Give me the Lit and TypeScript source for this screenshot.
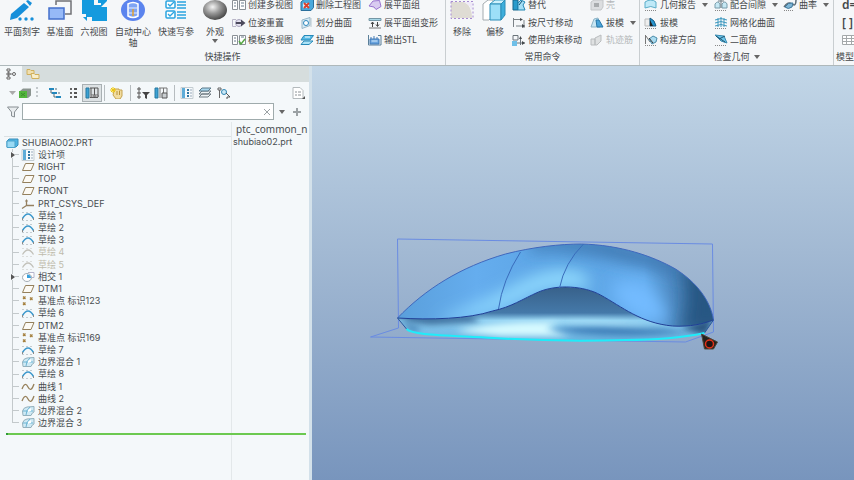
import { LitElement, html, svg, css, nothing } from "lit";
import { customElement } from "lit/decorators.js";
import { classMap } from "lit/directives/class-map.js";

// Small glyphs, all on a 14 x 12 grid.
const glyphs: Record<string, unknown> = {
  views: svg`<g fill="#fff" stroke="#8a9096"><path d="M.5 1.500h5v9h-5zM7.500 1.500h6v9h-6z"/></g><path d="M2 4h2M2 7h2M9 4h3M9 7h3" stroke="#6b7d8c"/>`,
  viewsCheck: svg`<g fill="#fff" stroke="#8a9096"><path d="M.5 1.500h5v9h-5zM7.500 1.500h6v9h-6z"/></g><path d="M2 4h2M2 7h2M9 3h3" stroke="#6b7d8c"/><path d="m7 7 2 3 4-5" fill="none" stroke="#58a846" stroke-width="1.500"/>`,
  pose: svg`<path d="M4 2.500H.500v7H4" fill="none" stroke="#b9b6c8"/><circle cx="7" cy="6" r="3.500" fill="#e6e3f2" stroke="#a7a3bb"/><path d="M4 5h5V2.500L13.500 6 9 9.500V7H4z" fill="#4c4a5c"/>`,
  deleteDrawing: svg`<path d="m1 3 3-2.500h9.500v8L11 11.500H1z" fill="#4aa8dc" stroke="#2b6f9c"/><path d="M3 4h6v5H3z" fill="#d9effa"/><path d="m4 4 5 5m0-5L4 9" stroke="#d8402c" stroke-width="2"/>`,
  split: svg`<path d="m2 3 8-2.500v8L2 11.500z" fill="#d6ebf5" stroke="#99b7c8"/><circle cx="6" cy="6" r="2.500" fill="#fff" stroke="#2c86bd"/><path d="M11 1v9" stroke="#b7c7d0"/>`,
  bend: svg`<path d="M4 1.500h9.500L10 6H1z" fill="#58bce8" stroke="#2789b8"/><path d="M1 10.500h8L13 7H4z" fill="#aee3f7" stroke="#2789b8"/><path d="M5 3h5" stroke="#fff"/>`,
  flatQuilt: svg`<path d="m1 7 4-5 6.500-.5 1.500 6-5 3L6 8z" fill="#d9cbf0" stroke="#9a74cf"/>`,
  flatDeform: svg`<path d="M1 1.500h12v2H1z" fill="#a7d8e8" stroke="#7497a6"/><path d="M4.500 10V5M9.500 5v4M3 7l1.500-2L6 7M8 7.500 9.500 9.500 11 7.500" fill="none" stroke="#444"/><path d="M1 11h12" stroke="#777"/>`,
  stl: svg`<path d="M.5 1v10M10 1.500h3V11M.5 11H13" fill="none" stroke="#5b7f99"/><path d="M2 5h9v5H2z" fill="#6ba5e0" stroke="#3f78b5"/><path d="M3 3v2M6 2v3M9 3v2" stroke="#3f78b5"/><path d="M3.500 7h6" stroke="#d7ebfa"/>`,
  replace: svg`<path d="M1 1h5v10H1z" fill="#2a9ccc" stroke="#17668c"/><path d="m6 4 3-3 4 2-2 3 2 5H6z" fill="#a5dff6" stroke="#2387b4"/><path d="M10 2 7 6" stroke="#17506e"/>`,
  dimMove: svg`<path d="M1.500 1v9M1 2.500h9M12 3v8M4 9h9" fill="none" stroke="#7b8287"/><path d="m8 1 3 1.500L8 4M10 7l3 2-3 2" fill="#44494d"/>`,
  constrainMove: svg`<path d="M1 1.500h5V6H1zM8.500 3v8M5 9h8" fill="none" stroke="#6a737a"/><path d="M0 7h5v5H0z" fill="#6ebfe8"/><path d="m10 7 3 2-3 2M7 5l1.500-3L10 5" fill="#44494d"/>`,
  shell: svg`<path d="m1 3 3-2h9v7l-2 3H1z" fill="#dcdee0" stroke="#c3c6c8"/><path d="M4 4h5v4H4z" fill="#a9acae"/>`,
  draft: svg`<path d="m1 10 3-8 4-1 2 9z" fill="#c7e6f4" stroke="#8db3c6"/><path d="m6 3 3 0 4 7H7z" fill="#4aa3d8" stroke="#2676a8"/>`,
  trajectory: svg`<path d="M1 5h4v6H1zM5 4l6-3v6l-4 4H5z" fill="#dfe1e2" stroke="#b9bcbe"/>`,
  geomReport: svg`<path d="M1 9V3q6-4 11 0v6q-5-3-11 0z" fill="#bfe9f8" stroke="#5badc9"/><path d="M1 11.500h12" stroke="#888" stroke-dasharray="1 1"/>`,
  draftCheck: svg`<path d="M1 2h5v7H1z" fill="#eee" stroke="#bbb"/><path d="M6 1q5 2 6 8H6z" fill="#2795cf" stroke="#195d85"/><path d="M6 3v6h3z" fill="#222"/><path d="M1 11.500h12" stroke="#888" stroke-dasharray="1 1"/>`,
  buildDir: svg`<path d="M1.500 1v9M2 2l4 6" stroke="#777"/><path d="m5 5 4-3 4 2-1 4-4 2z" fill="#a9dbf0" stroke="#4a8ba9"/><path d="m5 4 4 5" stroke="#333"/><path d="M1 11.500h12" stroke="#888" stroke-dasharray="1 1"/>`,
  clearance: svg`<path d="M1 9V5q3-4 5 0v4zM8 9V5q3-4 5 0v4z" fill="#c6e8f4" stroke="#789cab"/><path d="M4 2h6M7 0v9" stroke="#6f7c84"/><path d="M1 11.500h12" stroke="#888" stroke-dasharray="1 1"/>`,
  mesh: svg`<path d="M1 3q6-3 12 0M1 6q6-3 12 0M1 9q6-3 12 0M4 1v9M7 0v10M10 1v9" fill="none" stroke="#3d98bf"/><path d="M1 11.500h12" stroke="#888" stroke-dasharray="1 1"/>`,
  dihedral: svg`<path d="m1 1 9 1 3 7-6-2z" fill="#6cc6ec" stroke="#3a8bb1"/><path d="m2 2 9 6M5 5l6-3" stroke="#1f536e"/><path d="M1 11.500h12" stroke="#888" stroke-dasharray="1 1"/>`,
  curvature: svg`<path d="M1 8q4-6 8-3t4-4" fill="none" stroke="#5c6b75" stroke-width="1.500"/><path d="M2 8q3 3 7 0l1-4q-5-1-8 4z" fill="#7fb6d6" stroke="#41799b"/><path d="M1 11.500h10" stroke="#888" stroke-dasharray="1 1"/>`,
  table: svg`<path d="M.5 1.500h13v9H.500zM.5 4.500h13M.5 7.500h13M4.500 1v10M9.500 1v10" fill="#fff" stroke="#a4a8aa"/>`,

  modelTree: svg`<path d="M3 1h3v2H3zM3 5h3v2H3zM3 9h3v2H3z" fill="#fff" stroke="#666"/><circle cx="10" cy="6" r="1.500" fill="none" stroke="#666"/><path d="M4.500 3v6M6 6h2" stroke="#777"/>`,
  folders: svg`<path d="M1 1.500h3l1 1h3v4H1z" fill="#f0dfae" stroke="#d0b05c"/><path d="M5 5.500h3l1 1h4v4H6z" fill="#f8eecb" stroke="#d0b05c"/>`,
  greenCube: svg`<path d="m2 4 3-2.500h8v7L10 11H2z" fill="#8b9590"/><path d="M1 4h8v7H1z" fill="#52b53c"/><path d="m3 6 4 3M7 6 3 9" stroke="#3c8f2c"/>`,
  grip: svg`<path d="M7 0v12" stroke="#c3c9cc" stroke-width="2" stroke-dasharray="2 2"/>`,
  nested: svg`<path d="M1 2h5M4 6h5M8 10h5" stroke="#2287bd" stroke-width="2"/><path d="M3 3v3h1M6 7v3h2M7 2h2M10 6h2" fill="none" stroke="#516b79"/>`,
  list: svg`<path d="M3 2h2M3 6h2M3 10h2" stroke="#666" stroke-width="2"/><path d="M7 2h4M7 6h4M7 10h4" stroke="#555" stroke-width="2" stroke-dasharray="3 1"/>`,
  columns: svg`<path d="M1 1h3v10H1z" fill="#3ba1d4" stroke="#26789f"/><path d="M6 1v7M9.500 1v7M13 1v9M5 1h8M5 10.500h8" stroke="#555"/><path d="M6 8h3v2H6zM10 8h3v2h-3z" fill="#fff" stroke="#666"/>`,
  hand: svg`<path d="M4 4V2h5v1h3v6l-2 3H6L3 8z" fill="#f2dda0" stroke="#c4a250"/><path d="M7 4v4M9.500 4v4" stroke="#b8933b"/><path d="M3 0v6M0 3h6M1 1l4 4M5 1 1 5" stroke="#f0c808"/>`,
  filterList: svg`<path d="M2 1h2v2H2zM2 5h2v2H2zM2 9h2v2H2z" fill="#fff" stroke="#555"/><path d="M6 5h8l-3 3v4l-2-1V8z" fill="#444"/>`,
  searchColumns: svg`<path d="M1 1h3v10H1z" fill="#3ba1d4" stroke="#26789f"/><path d="M6 1v10M9.500 1v5M13 1v5M5 1h8" stroke="#777"/><path d="M8 6h5v5H8z" fill="#c9ced1" stroke="#555"/>`,
  designItems: svg`<path d="M1 .5h12v11H1z" fill="#f6fafc" stroke="#c4cdd2"/><path d="M2 1h3v10H2z" fill="#5eacd8"/><path d="M7 3h2M7 6h2M7 9h2" stroke="#2e75a2" stroke-width="2"/><path d="M10 3h2M10 6h2M10 9h2" stroke="#9ab"/>`,
  layers: svg`<path d="m1 10 3-3h9l-3 3zM1 7l3-3h9l-3 3z" fill="#eef3f5" stroke="#6e7b82"/><path d="m1 4 3-3h9l-3 3z" fill="#a6d6ee" stroke="#5d7b8a"/>`,
  locate: svg`<path d="M1 1h3v2H1zM2.500 3v8" fill="none" stroke="#666"/><circle cx="7" cy="5" r="2.500" fill="#cbe8f6" stroke="#3287b4"/><path d="m9 6 4 4-3 0v2" fill="none" stroke="#555"/>`,
  page: svg`<path d="M2 .5h7l3 3v8H2z" fill="#fff" stroke="#b4babd"/><path d="M4 5h2M4 8h2M7 5h3M7 8h3" stroke="#8c9296"/><path d="M14 9v3h-3z" fill="#555"/>`,
  funnel: svg`<path d="M1.500 1h11L8.500 6v5l-3-1V6z" fill="#e8ecee" stroke="#888f93"/>`,

  part: svg`<path d="m2 4 2-2h9v6l-2 2H2z" fill="#4fb4e4" stroke="#3a8fba"/><path d="M2 4h8v6.500H2z" fill="#9adaf4" stroke="#4ba3cc"/>`,
  plane: svg`<path d="M4.500 2.500H13l-3 7H1.500z" fill="#fcfaf4" stroke="#94805c"/>`,
  csys: svg`<path d="M5.500 2v5.500H13M5.500 7.500 1 10.500" fill="none" stroke="#958060" stroke-width="1.300"/><path d="M4 3.500 5.500 1 7 3.500" fill="#958060"/>`,
  sketch: svg`<path d="M1 2.500h12M1 10.500h12" stroke="#c4ccd0" stroke-dasharray="2 2"/><path d="M1.500 8.500q5.500-9 11 0" fill="none" stroke="#3a97cb" stroke-width="1.500"/><path d="M1.500 8v2M12.500 8v2" stroke="#888"/>`,
  sketchOff: svg`<path d="M1 2.500h12M1 10.500h12" stroke="#dcdedc" stroke-dasharray="2 2"/><path d="M1.500 8.500q5.500-9 11 0" fill="none" stroke="#c2c1b9" stroke-width="1.300"/>`,
  intersect: svg`<path d="M7 1.500h6v5H9" fill="#fff" stroke="#b4b4cc"/><ellipse cx="6" cy="6.500" rx="4.500" ry="4" fill="#fff" stroke="#a4adb4"/><path d="M6 3.500a4 3.500 0 0 1 4 3.500H6z" fill="#36a0dc"/>`,
  points: svg`<path d="m2 1.500 2.500 2.500m0-2.500L2 4M9 2.500l2.500 2.500m0-2.500L9 5M2 7.500 4.500 10m0-2.500L2 10" stroke="#a5813f" stroke-width="1.300"/>`,
  blend: svg`<path d="M1.500 6q1-3.500 4.500-4l7-.5v5.500q-2 .5-3 3.500H2z" fill="#cfeaf5" stroke="#94b0bc"/><path d="M5 10q0-5 4-8M2 6h10" fill="none" stroke="#6cb4d3"/><path d="m7 5 3-2v3l-3 1z" fill="#fff"/>`,
  curve: svg`<path d="M1 8q3-8 6-2t6-3" fill="none" stroke="#96805a" stroke-width="1.300"/>`,
};

// Large ribbon icons on a 26 x 22 grid.
const bigGlyphs: Record<string, unknown> = {
  engrave: svg`<path d="m1 20 1-6L15 3l5 4L8 18z" fill="#168fda"/><path d="m17 1 2-1 4 3-2 3z" fill="#168fda"/><g fill="#168fda"><circle cx="11" cy="19" r="1.700"/><circle cx="17" cy="19" r="1.700"/><circle cx="23" cy="19" r="1.700"/></g>`,
  datum: svg`<path d="M9 5V1h15v13h-6" fill="none" stroke="#707276" stroke-width="1.500"/><path d="M2 8h15v11H2z" fill="#96b9f7" stroke="#4470cc" stroke-width="1.500"/>`,
  sixView: svg`<path d="M1 0h25v21H1z" fill="#149ade"/><path d="M13 0h4v5h-4zM17 3h3v2h-3zM1 14h4v3H1zM6 17h5v4H6z" fill="#f5f7f9"/><path d="m20 7 6-6v6zM1 21v-5l5 5z" fill="#f5f7f9"/>`,
  axis: svg`<ellipse cx="13" cy="10" rx="12" ry="11" fill="#5b84ee"/><path d="M8 4q5-3 10 0v12q-5 3-10 0z" fill="#7fa5f4" stroke="#fff" stroke-width="1.500"/><path d="M8 8h10M8 13h10" stroke="#e6eeff"/><path d="M13 9v7" stroke="#e0a030" stroke-width="1.500"/>`,
  params: svg`<g fill="#fff" stroke="#2aa4e0" stroke-width="1.500"><rect x="3" y="1" width="9" height="7" rx="1"/><rect x="3" y="11" width="9" height="7" rx="1"/></g><path d="m5 4 2 2 4-4M5 14l2 2 4-4" fill="none" stroke="#2aa4e0" stroke-width="1.300"/><path d="M14 2h9M14 5h9M14 8h9M14 12h9M14 15h9M14 18h9" stroke="#2aa4e0" stroke-width="1.300"/>`,
  look: svg`<defs><radialGradient id="ball" cx=".4" cy=".35" r=".65"><stop offset="0" stop-color="#f4f4f4"/><stop offset=".5" stop-color="#979797"/><stop offset="1" stop-color="#4a4a4a"/></radialGradient></defs><ellipse cx="13" cy="10" rx="12" ry="10" fill="url(#ball)"/>`,
  remove: svg`<path d="M2 2h13q8 4 8 16H2z" fill="#dfdcd4"/><path d="M2 1.500h22v17H2z" fill="none" stroke="#a78ad2" stroke-dasharray="2 2"/><path d="M15 2q7 3 8 10V2z" fill="#efeaf8"/>`,
  offset: svg`<path d="m1 4 5-4h5v16l-4 4H1z" fill="#fff" stroke="#a3abb0"/><path d="m8 4 5-4h10l-4 4z" fill="#cff1fc" stroke="#3a9dc4"/><path d="M8 4h11v16H8z" fill="#9cdff8" stroke="#2b8db8"/><path d="m19 4 4-4v15l-4 5z" fill="#3eaedb" stroke="#2b8db8"/>`,
};

const icon = (name: string) => html`<svg class="icon" viewBox="0 0 14 12" aria-hidden="true">${glyphs[name]}</svg>`;
const caret = html`<svg class="caret" viewBox="0 0 6 4" aria-hidden="true"><path d="M0 0h6L3 4z" fill="currentColor" /></svg>`;

const big = (name: string, label: string, menu = false) => html`
  <button class="big">
    <svg class="big-icon" viewBox="0 0 26 22" aria-hidden="true">${bigGlyphs[name]}</svg>
    <span>${label}</span>${menu ? caret : nothing}
  </button>`;

const small = (name: string, label: string, menu = false, disabled = false) => html`
  <button class="small" ?disabled=${disabled}>${icon(name)}<span>${label}</span>${menu ? caret : nothing}</button>`;

interface Item { icon: string; label: string; off?: boolean; opens?: boolean }

const items: Item[] = [
  { icon: "designItems", label: "设计项", opens: true },
  { icon: "plane", label: "RIGHT" },
  { icon: "plane", label: "TOP" },
  { icon: "plane", label: "FRONT" },
  { icon: "csys", label: "PRT_CSYS_DEF" },
  { icon: "sketch", label: "草绘 1" },
  { icon: "sketch", label: "草绘 2" },
  { icon: "sketch", label: "草绘 3" },
  { icon: "sketchOff", label: "草绘 4", off: true },
  { icon: "sketchOff", label: "草绘 5", off: true },
  { icon: "intersect", label: "相交 1", opens: true },
  { icon: "plane", label: "DTM1" },
  { icon: "points", label: "基准点 标识123" },
  { icon: "sketch", label: "草绘 6" },
  { icon: "plane", label: "DTM2" },
  { icon: "points", label: "基准点 标识169" },
  { icon: "sketch", label: "草绘 7" },
  { icon: "blend", label: "边界混合 1" },
  { icon: "sketch", label: "草绘 8" },
  { icon: "curve", label: "曲线 1" },
  { icon: "curve", label: "曲线 2" },
  { icon: "blend", label: "边界混合 2" },
  { icon: "blend", label: "边界混合 3" },
];

const shared = css`
  * { box-sizing: border-box; }
  button {
    border: 0; margin: 0; padding: 0; background: none;
    font: inherit; color: inherit; display: flex; align-items: center;
  }
  .icon { width: 14px; height: 12px; flex: none; display: block; }
  .caret { width: 6px; height: 4px; flex: none; color: #666; }
`;

@customElement("cad-ribbon")
export class CadRibbon extends LitElement {
  static styles = [shared, css`
    :host {
      display: flex; overflow: hidden; white-space: nowrap;
      background: #f5f7f9; border-bottom: 1px solid #aeb8bb; color: #45484b;
    }
    .group { flex: none; display: flex; flex-direction: column; border-right: 1px solid #c9ced1; }
    .group.rest { flex: 1; border: 0; min-width: 0; padding-left: 2px; }
    .body { display: flex; height: 48px; }
    .bigs { display: grid; }
    .bigs.quick { grid-template-columns: 44px 32px 36px 42px 44px 34px; }
    .bigs.common { grid-template-columns: 32px 34px; }
    .big { flex-direction: column; line-height: 11px; white-space: normal; height: 48px; }
    .big-icon { width: 26px; height: 22px; margin-bottom: 4px; display: block; flex: none; }
    .big span { width: 36px; text-align: center; }
    .big .caret { margin-top: 2px; }
    .cols { display: grid; grid-template-rows: 18px 17px 17px; grid-auto-flow: column; margin-top: -4px; }
    .cols.quick { grid-template-columns: 68px 68px 77px; }
    .cols.common { grid-template-columns: 78px 49px; }
    .cols.check { grid-template-columns: 70px 69px 50px; padding-left: 4px; }
    .small { gap: 2px; line-height: 10px; }
    .small .caret { margin-left: 4px; }
    .small:disabled { color: #b4b8ba; }
    .code { font-size: 12px; line-height: 10px; font-weight: 600; padding-left: 6px; }
    .name { height: 17px; line-height: 17px; display: flex; align-items: center; justify-content: center; gap: 4px; }
    .rest .name { justify-content: flex-start; }
  `];

  render() {
    return html`
      <section class="group">
        <div class="body">
          <div class="bigs quick">
            ${big("engrave", "平面刻字")}${big("datum", "基准面")}${big("sixView", "六视图")}
            ${big("axis", "自动中心轴")}${big("params", "快速写参")}${big("look", "外观", true)}
          </div>
          <div class="cols quick">
            ${small("views", "创建多视图")}${small("pose", "位姿重置")}${small("viewsCheck", "模板多视图")}
            ${small("deleteDrawing", "删除工程图")}${small("split", "划分曲面")}${small("bend", "扭曲")}
            ${small("flatQuilt", "展平面组")}${small("flatDeform", "展平面组变形")}${small("stl", "输出STL")}
          </div>
        </div>
        <div class="name">快捷操作</div>
      </section>
      <section class="group">
        <div class="body">
          <div class="bigs common">${big("remove", "移除")}${big("offset", "偏移")}</div>
          <div class="cols common">
            ${small("replace", "替代")}${small("dimMove", "按尺寸移动")}${small("constrainMove", "使用约束移动")}
            ${small("shell", "壳", false, true)}${small("draft", "拔模", true)}${small("trajectory", "轨迹筋", false, true)}
          </div>
        </div>
        <div class="name">常用命令</div>
      </section>
      <section class="group">
        <div class="body">
          <div class="cols check">
            ${small("geomReport", "几何报告", true)}${small("draftCheck", "拔模")}${small("buildDir", "构建方向")}
            ${small("clearance", "配合间隙", true)}${small("mesh", "网格化曲面")}${small("dihedral", "二面角")}
            ${small("curvature", "曲率", true)}
          </div>
        </div>
        <button class="name">检查几何${caret}</button>
      </section>
      <section class="group rest">
        <div class="body">
          <div class="cols">
            <button class="code">d=</button>
            <button class="code">[ ]</button>
            <button class="code" aria-label="族表">${icon("table")}</button>
          </div>
        </div>
        <div class="name">模型</div>
      </section>`;
  }
}

@customElement("model-tree")
export class ModelTree extends LitElement {
  static styles = [shared, css`
    :host {
      display: flex; flex-direction: column; overflow: hidden; white-space: nowrap;
      background: #f4f8fa; border-right: 3px solid #d3e1ea; color: #484d50;
    }
    .tabs { display: flex; height: 16px; flex: none; background: #d6dddd; }
    .tab { width: 22px; justify-content: center; }
    .tab.on { background: #f4f8fa; }
    .tools { display: flex; align-items: center; height: 21px; flex: none; padding: 0 4px 0 6px; }
    .tools button { justify-content: center; height: 18px; flex: none; }
    .w9 { width: 9px; }
    .w12 { width: 12px; color: #aaa; }
    .w14 { width: 14px; }
    .w16 { width: 16px; }
    .w22 { width: 22px; }
    .w28 { width: 28px; }
    .tools .on { width: 20px; margin-left: 4px; background: #dde2e4; border: 1px solid #a9b0b3; }
    .sep { width: 4px; height: 16px; display: flex; justify-content: center; flex: none; }
    .sep.wide { width: 12px; }
    .sep::before { content: ""; width: 1px; background: #b6bcbf; }
    .push { flex: 1; }
    .search { display: flex; align-items: center; height: 17px; flex: none; padding: 0 5px 0 6px; }
    .search > .icon { margin-right: 2px; }
    .box { display: flex; flex: 1; height: 17px; border: 1px solid #9fabac; background: #fff; align-items: center; }
    .box input { flex: 1; min-width: 0; height: 15px; border: 0; padding: 0 3px; background: none; font: inherit; outline: 0; }
    .box button { width: 13px; justify-content: center; color: #9ba1a4; }
    .search > button { width: 15px; height: 17px; justify-content: center; }
    .cross { width: 8px; height: 8px; }
    .tree {
      flex: 1; min-height: 0; margin-top: 2px; padding: 0 2px 0 4px;
      background: linear-gradient(#e3e8ea, #e3e8ea) 231px 0 / 1px 100% no-repeat;
    }
    table { border-collapse: collapse; table-layout: fixed; width: 100%; }
    .first { width: 227px; }
    th, td { padding: 0; font-weight: 400; text-align: left; line-height: 12px; height: 12px; }
    thead th { height: 14px; font-size: 10px; line-height: 14px; border-bottom: 1px solid #dbe1e3; }
    thead th + th { border: 0; padding-left: 5px; }
    td { font-family: Inter, "Noto Sans CJK SC", sans-serif; }
    td + td { padding-left: 2px; }
    tbody tr:nth-child(5n) td { height: 13px; }
    .cell { display: flex; align-items: center; gap: 3px; height: 12px; }
    .root { padding-left: 1px; }
    .branch {
      background:
        linear-gradient(#c3c9cb, #c3c9cb) 8px 0 / 1px 100% no-repeat,
        linear-gradient(#c3c9cb, #c3c9cb) 8px 50% / 7px 1px no-repeat;
    }
    .branch.last {
      background:
        linear-gradient(#c3c9cb, #c3c9cb) 8px 0 / 1px 50% no-repeat,
        linear-gradient(#c3c9cb, #c3c9cb) 8px 50% / 7px 1px no-repeat;
    }
    .off { color: #c0bcac; }
    .knob { width: 14px; flex: none; height: 12px; padding-left: 6px; }
    .arrow { width: 5px; height: 6px; background: #f4f8fa; }
    .insert { height: 2px; margin: 4px 1px 0 2px; background: #6cc950; border-left: 2px solid #2f9a35; }
  `];

  private row(item: Item, last: boolean) {
    return html`<tr>
      <td class=${classMap({ branch: true, last, off: !!item.off })}>
        <div class="cell">
          ${item.opens
            ? html`<button class="knob" aria-label="展开"><svg class="arrow" viewBox="0 0 5 6"><path d="M1 0v6l4-3z" fill="#555" /></svg></button>`
            : html`<span class="knob"></span>`}
          ${icon(item.icon)}<span>${item.label}</span>
        </div>
      </td>
      <td></td>
    </tr>`;
  }

  render() {
    return html`
      <div class="tabs">
        <button class="tab on" aria-label="模型树">${icon("modelTree")}</button>
        <button class="tab" aria-label="文件夹">${icon("folders")}</button>
      </div>
      <div class="tools">
        <button class="w12" aria-label="菜单"><svg class="icon w9" viewBox="0 0 9 12"><path d="M1 4h7L4.500 8z" fill="currentColor" /></svg></button>
        <button class="w14" aria-label="模型">${icon("greenCube")}</button>
        <button class="w9" aria-label="移动">${icon("grip")}</button>
        <button class="w28" aria-label="展开全部">${icon("nested")}</button>
        <button class="w9" aria-label="列表">${icon("list")}</button>
        <button class="on" aria-label="树列" aria-pressed="true">${icon("columns")}</button>
        <span class="sep"></span>
        <button class="w22" aria-label="选择">${icon("hand")}</button>
        <span class="sep"></span>
        <button class="w22" aria-label="树过滤器">${icon("filterList")}</button>
        <button class="w14" aria-label="查找列">${icon("searchColumns")}</button>
        <span class="sep wide"></span>
        <button class="w14" aria-label="设计项">${icon("designItems")}</button>
        <button class="w22" aria-label="层">${icon("layers")}</button>
        <button class="w16" aria-label="定位">${icon("locate")}</button>
        <span class="push"></span>
        <button class="w14" aria-label="设置">${icon("page")}</button>
      </div>
      <div class="search">
        ${icon("funnel")}
        <div class="box">
          <input type="text" aria-label="搜索" />
          <button aria-label="清除"><svg class="cross" viewBox="0 0 8 8"><path d="m1 1 6 6M7 1 1 7" stroke="currentColor" /></svg></button>
        </div>
        <button aria-label="搜索选项">${caret}</button>
        <button aria-label="添加"><svg class="cross" viewBox="0 0 8 8"><path d="M4 0v8M0 4h8" stroke="#9ba1a4" stroke-width="2" /></svg></button>
      </div>
      <div class="tree">
        <table>
          <thead><tr><th class="first" aria-label="名称"></th><th>ptc_common_n</th></tr></thead>
          <tbody>
            <tr>
              <td><div class="cell root">${icon("part")}<span>SHUBIAO02.PRT</span></div></td>
              <td>shubiao02.prt</td>
            </tr>
            ${items.map((item, i) => this.row(item, i === items.length - 1))}
          </tbody>
        </table>
        <div class="insert"></div>
      </div>`;
  }
}

@customElement("model-view")
export class ModelView extends LitElement {
  static styles = css`
    :host { display: block; overflow: hidden; background: linear-gradient(#c2d6e7, #a2b9d3 45%, #7895bd); }
    svg { display: block; width: 100%; height: 100%; }
  `;

  render() {
    const top = "M397 318C425 289 460 267 505 254C532 247 560 244 581 244C620 245 652 256 675 269C697 283 710 301 713 320";
    const hump = "C702 324 690 327 672 326C640 323 622 307 600 295C584 286 557 284 538 292C522 299 511 307 492 311C468 319 430 320 397 318";
    const rim = "M406 329C412 335 440 335 493 338C540 341 590 341 625 340C660 340 685 337 704 333";
    return html`
      <svg viewBox="311 66 543 414" preserveAspectRatio="xMidYMid slice" role="img" aria-label="SHUBIAO02">
        <defs>
          <linearGradient id="shell" gradientUnits="userSpaceOnUse" x1="397" y1="0" x2="713" y2="0">
            <stop offset="0" stop-color="#5a9fdb" /><stop offset=".25" stop-color="#65adee" />
            <stop offset=".55" stop-color="#5aa2e2" /><stop offset=".78" stop-color="#65adee" />
            <stop offset=".88" stop-color="#4b86bd" /><stop offset="1" stop-color="#305f8c" />
          </linearGradient>
          <linearGradient id="side" gradientUnits="userSpaceOnUse" x1="0" y1="287" x2="0" y2="341">
            <stop offset="0" stop-color="#38618a" /><stop offset=".48" stop-color="#4579a9" />
            <stop offset=".62" stop-color="#8fd0f2" /><stop offset=".8" stop-color="#7cc0ea" />
            <stop offset="1" stop-color="#69b2de" />
          </linearGradient>
          <clipPath id="shellClip"><path d="${top + hump}Z" /></clipPath>
          <clipPath id="sideClip">
            <path d="M397 318C430 320 468 319 492 311C511 307 522 299 538 292C557 284 584 286 600 295C622 307 640 323 672 326C690 327 702 324 713 320L704 333C685 337 660 340 625 340C590 341 540 341 493 338C440 335 412 335 406 329Z" />
          </clipPath>
          <filter id="soft" x="-60%" y="-100%" width="220%" height="300%"><feGaussianBlur stdDeviation="8" /></filter>
          <filter id="thin" x="-50%" y="-200%" width="200%" height="500%"><feGaussianBlur stdDeviation="3" /></filter>
        </defs>

        <path d="M397 239 712 244 713 332 685 342 560 340 370 337 398 328z" fill="none" stroke="#6a8ce2" />

        <g clip-path="url(#sideClip)">
          <path d="M390 280h330v65H390z" fill="url(#side)" />
          <path d="M395 315H470L480 322 430 325 410 323z" fill="#3d709f" filter="url(#thin)" />
          <path d="M455 331Q500 320 560 322L545 328 570 336 500 336z" fill="#d6faff" filter="url(#thin)" />
          <path d="M550 329Q610 322 690 332Q630 339 580 334z" fill="#3f80ba" filter="url(#thin)" />
          <path d="M540 322Q600 318 660 327L600 324z" fill="#c3f1ff" filter="url(#thin)" />
          <path d="M398 319 422 329 412 333z" fill="#4b86b8" filter="url(#thin)" />
          <path d="M680 328 714 316 706 336z" fill="#2c5682" filter="url(#thin)" />
        </g>

        <g clip-path="url(#shellClip)">
          <path d="M390 240h330v90H390z" fill="url(#shell)" />
          <path d="M440 319Q490 300 520 282Q560 262 585 274L590 290Q550 282 520 300Q480 318 440 322z" fill="#92dcff" filter="url(#soft)" />
          <path d="M530 240Q600 232 670 258L700 280Q650 268 600 256T530 252z" fill="#3c76ae" filter="url(#soft)" />
          <path d="M610 285Q640 275 655 295T665 323Q640 322 620 305z" fill="#73bbff" filter="url(#soft)" />
          <path d="M682 265 725 280 725 330 680 332Q694 300 682 265z" fill="#285783" filter="url(#soft)" />
        </g>

        <path d=${top} fill="none" stroke="#4068bd" />
        <path d="M713 320${hump}" fill="none" stroke="#203f96" />
        <path d="M713 320 704 333M397 318 406 329" stroke="#2b579c" />
        <path d="M520 252Q502 280 498 309M583 244Q564 263 559 288" fill="none" stroke="#3a6cbb" />
        <path d=${rim} fill="none" stroke="#1fecfa" stroke-width="2" />

        <path d="m701 334 16 8-4 7h-9z" fill="#24221f" stroke="#50483a" />
        <circle cx="709" cy="344" r="4" fill="#211414" stroke="#e33419" stroke-width="1.500" />
      </svg>`;
  }
}

@customElement("app-root")
export class AppRoot extends LitElement {
  static styles = css`
    :host {
      display: grid; grid-template: auto minmax(0, 1fr) / 312px minmax(0, 1fr);
      height: 100vh; overflow: hidden;
      font: 9px/12px "Noto Sans", "Noto Sans CJK SC", sans-serif;
    }
    cad-ribbon { grid-column: 1 / -1; }
  `;

  render() {
    return html`<cad-ribbon></cad-ribbon><model-tree></model-tree><model-view></model-view>`;
  }
}
